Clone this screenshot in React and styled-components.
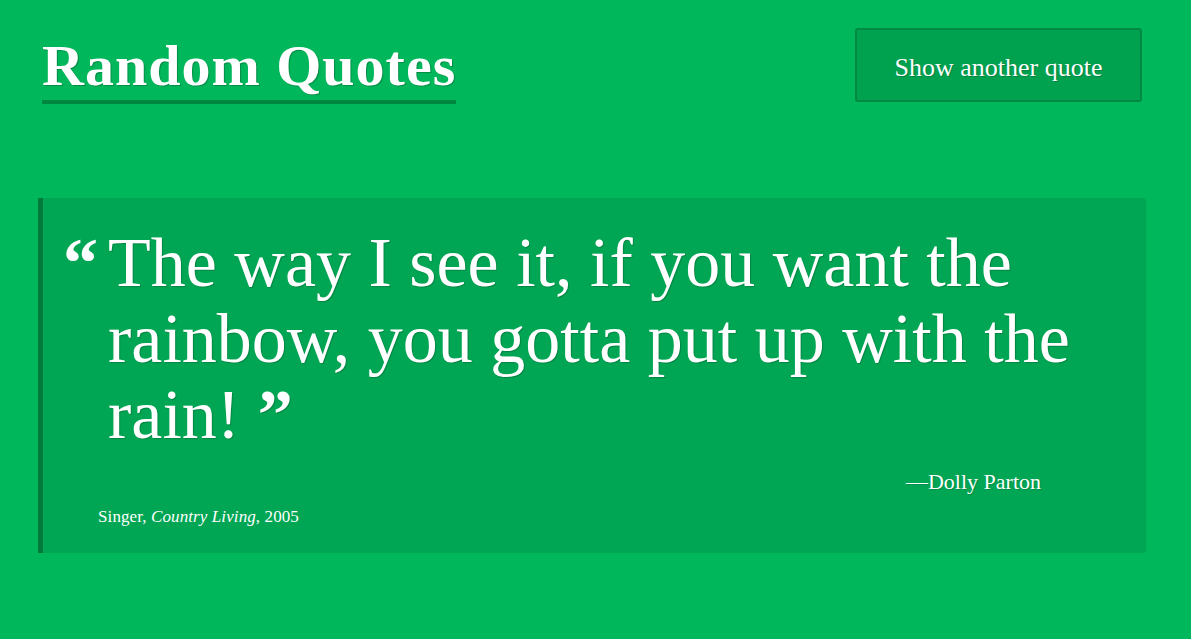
import styled, { createGlobalStyle } from "styled-components";

const Global = createGlobalStyle`
    html, body {
        margin: 0;
        padding: 0;
        background: #00b85b;
        font-family: "Liberation Serif", "Times New Roman", serif;
        color: #fff;
    }
`;

const quote = {
    text: "The way I see it, if you want the rainbow, you gotta put up with the rain!",
    author: "Dolly Parton",
    role: "Singer",
    source: "Country Living",
    year: 2005,
};

const App = () => {
    return (
        <Page>
            <Global />
            <Header>
                <Title>Random Quotes</Title>
                <NextButton type="button">Show another quote</NextButton>
            </Header>
            <Card>
                <QuoteRow>
                    <OpenMark>“</OpenMark>
                    <QuoteText>
                        {quote.text} <CloseMark>”</CloseMark>
                    </QuoteText>
                </QuoteRow>
                <Author>—{quote.author}</Author>
                <Source>
                    {quote.role}, <cite>{quote.source}</cite>, {quote.year}
                </Source>
            </Card>
        </Page>
    );
};

export default App;

const Page = styled.div`
    width: 1191px;
    height: 639px;
    box-sizing: border-box;
    overflow: hidden;
`;

const Header = styled.header`
    display: flex;
    justify-content: space-between;
    align-items: flex-start;
    padding: 28px 49px 0 42px;
`;

const Title = styled.h1`
    margin: 5px 0 0;
    font-size: 58px;
    font-weight: 700;
    line-height: 1.15;
    letter-spacing: 1px;
    border-bottom: 4px solid #00873f;
    text-shadow: 1px 1px 1px rgba(0, 0, 0, 0.25);
`;

const NextButton = styled.button`
    width: 287px;
    height: 74px;
    padding: 5px 0 0;
    background: #00a24f;
    border: 2px solid #008a43;
    border-radius: 3px;
    color: #fff;
    font-family: inherit;
    font-size: 26px;
    text-shadow: 1px 1px 1px rgba(0, 0, 0, 0.2);
    cursor: pointer;
`;

const Card = styled.blockquote`
    margin: 94px 45px 0 38px;
    padding: 27px 46px 26px 20px;
    background: #00a653;
    border-left: 5px solid #007a3b;
    border-radius: 0 3px 3px 0;
`;

const QuoteRow = styled.div`
    display: flex;
    align-items: flex-start;
`;

const OpenMark = styled.span`
    flex: 0 0 45px;
    font-size: 70px;
    font-weight: 700;
    line-height: 76px;
`;

const QuoteText = styled.p`
    margin: 0;
    flex: 1;
    font-size: 70px;
    line-height: 76px;
    text-shadow: 1px 1px 1px rgba(0, 0, 0, 0.2);
`;

const CloseMark = styled.span`
    font-weight: 700;
`;

const Author = styled.div`
    margin: 16px 59px 0 0;
    text-align: right;
    font-size: 22px;
    line-height: 1.2;
    text-shadow: 1px 1px 1px rgba(0, 0, 0, 0.15);
`;

const Source = styled.div`
    margin: 12px 0 0 35px;
    font-size: 17px;
    line-height: 20px;
    letter-spacing: 0.1px;

    cite {
        font-style: italic;
    }
`;
